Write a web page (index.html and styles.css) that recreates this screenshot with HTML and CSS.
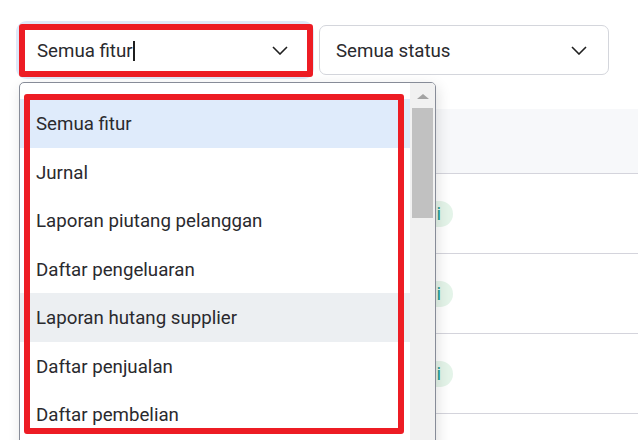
FILE: index.html
```html
<html>
<head>
	<title>Filter</title>
	<link rel="stylesheet" href="styles.css">
</head>
<body>
	<div class="page">
		<section class="filters">
			<div class="pilih aktif">
				<span class="nilai">Semua fitur</span><span class="kursor"></span>
				<svg class="chevron" viewBox="0 0 16 9"><path d="M1 1l7 7 7-7"/></svg>
			</div>
			<div class="pilih">
				<span class="nilai">Semua status</span>
				<svg class="chevron" viewBox="0 0 16 9"><path d="M1 1l7 7 7-7"/></svg>
			</div>
			<div class="tanda tanda-atas"></div>
		</section>

		<section class="tabel">
			<div class="kepala"></div>
			<div class="baris"><div class="sel"><span class="lencana">Selesai</span></div></div>
			<div class="baris"><div class="sel"><span class="lencana">Selesai</span></div></div>
			<div class="baris"><div class="sel"><span class="lencana">Selesai</span></div></div>
			<div class="baris"><div class="sel"><span class="lencana">Selesai</span></div></div>
		</section>

		<!-- daftar pilihan yang sedang terbuka -->
		<div class="daftar">
			<ul class="opsi">
				<li class="terpilih">Semua fitur</li>
				<li>Jurnal</li>
				<li>Laporan piutang pelanggan</li>
				<li>Daftar pengeluaran</li>
				<li class="hover">Laporan hutang supplier</li>
				<li>Daftar penjualan</li>
				<li>Daftar pembelian</li>
			</ul>
			<div class="gulir">
				<div class="panah"></div>
				<div class="jempol"></div>
			</div>
		</div>
		<div class="tanda tanda-bawah"></div>
	</div>
</body>
</html>
```

FILE: styles.css
```css
* {box-sizing: border-box;}
body {margin: 0; background: #fff; font-family: Roboto, "Liberation Sans", sans-serif; color: #222;}
.page {position: relative; padding: 25px 0 0 20px; height: 440px; overflow: hidden;}

.filters {display: flex; gap: 9px; position: relative;}
.pilih {
	width: 290px;
	height: 50px;
	border: 1px solid #d4d6dc;
	border-radius: 7px;
	display: flex;
	align-items: center;
	padding: 1px 21px 0 16px;
	font-size: 18.7px;
	background: #fff;
}
.pilih.aktif {border-color: #2f5ec4; box-shadow: 0 0 0 4px #dfe8f8;}
.pilih .nilai {color: #2a2a2e;}
.kursor {display: inline-block; width: 2px; height: 20px; background: #1f1f1f; margin-left: 0;}
.chevron {width: 16px; height: 9px; margin-left: auto; fill: none; stroke: #202020; stroke-width: 1.6;}

.tanda {position: absolute; border: 6px solid #ed1c24; border-radius: 3px; pointer-events: none;}
.tanda-atas {left: -1px; top: -1px; width: 294px; height: 53px;}
.tanda-bawah {left: 24px; top: 94px; width: 380px; height: 340px; z-index: 3;}

.tabel {margin-top: 34px;}
.kepala {height: 65px; background: #f7f8fa; border-bottom: 1px solid #d4d4dc;}
.baris {height: 80px; border-bottom: 1px solid #d4d4dc; display: flex; align-items: center; flex-shrink: 0;}
.sel {width: 433px; display: flex; justify-content: flex-end;}
.lencana {
	background: #e4f4e9;
	color: #1b9a8c;
	font-size: 18.7px;
	line-height: 26px;
	padding: 0 12px;
	border-radius: 13px;
}

.daftar {
	position: absolute;
	left: 19px;
	top: 82px;
	width: 417px;
	height: 380px;
	border: 1px solid #878c98;
	border-radius: 5px;
	background: #fff;
	box-shadow: 2px 4px 14px rgba(0, 0, 0, 0.12);
	display: flex;
	overflow: hidden;
	z-index: 2;
}
.opsi {list-style: none; margin: 0; padding: 16px 0 0; flex: 1;}
.opsi li {height: 48.5px; line-height: 50px; padding-left: 16px; font-size: 18.7px; color: #2a2a2e; white-space: nowrap;}
.opsi li.terpilih {background: #dfebfb;}
.opsi li.hover {background: #eceff2;}

.gulir {width: 25px; background: #f1f1f1; position: relative;}
.panah {
	position: absolute;
	left: 7px;
	top: 11px;
	width: 0;
	height: 0;
	border-left: 6px solid transparent;
	border-right: 6px solid transparent;
	border-bottom: 5px solid #a3a3a3;
}
.jempol {position: absolute; left: 2px; top: 25px; width: 21px; height: 110px; background: #c1c1c1;}
```
